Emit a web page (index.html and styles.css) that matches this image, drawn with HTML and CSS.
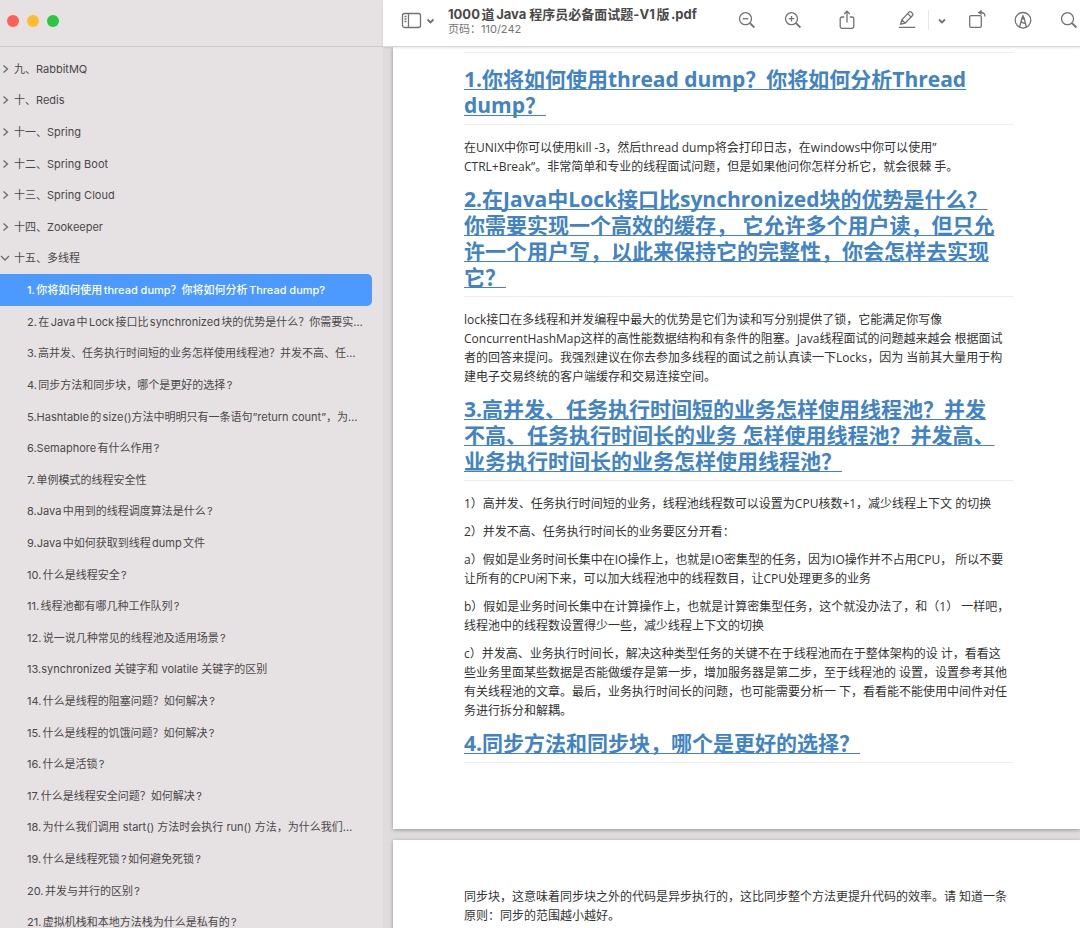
FILE: index.html
```html
<!DOCTYPE html>
<html lang="zh-CN">
<head>
<meta charset="utf-8">
<title>1000道Java程序员必备面试题-V1版.pdf</title>
<link rel="stylesheet" href="styles.css">
</head>
<body>
<div class="window">
  <aside class="sidebar">
    <div class="window-bar">
      <button class="light light-close" aria-label="关闭"></button>
      <button class="light light-min" aria-label="最小化"></button>
      <button class="light light-zoom" aria-label="缩放"></button>
    </div>
    <nav class="outline" aria-label="目录">
      <ul class="outline-list">
        <li class="row chapter"><svg class="chev" viewBox="0 0 10 10"><path d="M3.500 1.500 7.500 5 3.500 8.500"/></svg><a href="#c9">九、RabbitMQ</a></li>
        <li class="row chapter"><svg class="chev" viewBox="0 0 10 10"><path d="M3.500 1.500 7.500 5 3.500 8.500"/></svg><a href="#c10">十、Redis</a></li>
        <li class="row chapter"><svg class="chev" viewBox="0 0 10 10"><path d="M3.500 1.500 7.500 5 3.500 8.500"/></svg><a href="#c11">十一、Spring</a></li>
        <li class="row chapter"><svg class="chev" viewBox="0 0 10 10"><path d="M3.500 1.500 7.500 5 3.500 8.500"/></svg><a href="#c12">十二、Spring Boot</a></li>
        <li class="row chapter"><svg class="chev" viewBox="0 0 10 10"><path d="M3.500 1.500 7.500 5 3.500 8.500"/></svg><a href="#c13">十三、Spring Cloud</a></li>
        <li class="row chapter"><svg class="chev" viewBox="0 0 10 10"><path d="M3.500 1.500 7.500 5 3.500 8.500"/></svg><a href="#c14">十四、Zookeeper</a></li>
        <li class="row chapter"><svg class="chev" viewBox="0 0 10 10"><path d="M1 3 5 7 9 3"/></svg><a href="#c15">十五、多线程</a></li>
        <li class="row selected"><a href="#q1">1.你将如何使用thread dump？你将如何分析Thread dump?</a></li>
        <li class="row"><a href="#q2">2.在Java中Lock接口比synchronized块的优势是什么？你需要实…</a></li>
        <li class="row"><a href="#q3">3.高并发、任务执行时间短的业务怎样使用线程池？并发不高、任…</a></li>
        <li class="row"><a href="#q4">4.同步方法和同步块，哪个是更好的选择?</a></li>
        <li class="row"><a href="#q5">5.Hashtable的size()方法中明明只有一条语句”return count”，为…</a></li>
        <li class="row"><a href="#q6">6.Semaphore有什么作用?</a></li>
        <li class="row"><a href="#q7">7.单例模式的线程安全性</a></li>
        <li class="row"><a href="#q8">8.Java中用到的线程调度算法是什么?</a></li>
        <li class="row"><a href="#q9">9.Java中如何获取到线程dump文件</a></li>
        <li class="row"><a href="#q10">10.什么是线程安全?</a></li>
        <li class="row"><a href="#q11">11.线程池都有哪几种工作队列?</a></li>
        <li class="row"><a href="#q12">12.说一说几种常见的线程池及适用场景?</a></li>
        <li class="row"><a href="#q13">13.synchronized 关键字和 volatile 关键字的区别</a></li>
        <li class="row"><a href="#q14">14.什么是线程的阻塞问题？如何解决?</a></li>
        <li class="row"><a href="#q15">15.什么是线程的饥饿问题？如何解决?</a></li>
        <li class="row"><a href="#q16">16.什么是活锁?</a></li>
        <li class="row"><a href="#q17">17.什么是线程安全问题？如何解决?</a></li>
        <li class="row"><a href="#q18">18.为什么我们调用 start() 方法时会执行 run() 方法，为什么我们…</a></li>
        <li class="row"><a href="#q19">19.什么是线程死锁?如何避免死锁?</a></li>
        <li class="row"><a href="#q20">20.并发与并行的区别?</a></li>
        <li class="row"><a href="#q21">21.虚拟机栈和本地方法栈为什么是私有的?</a></li>
      </ul>
    </nav>
  </aside>

  <main class="viewer">
    <header class="toolbar">
      <button class="tool side-tool" aria-label="边栏">
        <svg width="34" height="20" viewBox="0 0 34 20"><rect x="2.500" y="3.500" width="18" height="14" rx="2"/><path d="M8.500 3.500v14M4.500 6.500h2M4.500 9h2M4.500 11.500h2"/><path class="bold" d="m27.500 9.500 3 3 3-3"/></svg>
      </button>
      <div class="doc-info">
        <h1 class="doc-title">1000道Java 程序员必备面试题-V1版.pdf</h1>
        <p class="doc-page">页码：110/242</p>
      </div>
      <div class="tools">
        <button class="tool" aria-label="缩小"><svg width="20" height="20" viewBox="0 0 20 20"><circle cx="8.500" cy="8.700" r="6"/><path d="M5.700 8.700h5.600"/><path class="bold" d="m13 13.200 4.400 4.300"/></svg></button>
        <button class="tool gap-26" aria-label="放大"><svg width="20" height="20" viewBox="0 0 20 20"><circle cx="8.500" cy="8.700" r="6"/><path d="M5.700 8.700h5.600M8.500 5.900v5.600"/><path class="bold" d="m13 13.200 4.400 4.300"/></svg></button>
        <button class="tool gap-34" aria-label="共享"><svg width="20" height="20" viewBox="0 0 20 20"><path d="M7.200 7H4.900A1.700 1.700 0 0 0 3.200 8.700v7.900a1.700 1.700 0 0 0 1.700 1.700h10.200a1.700 1.700 0 0 0 1.700-1.700V8.700A1.700 1.700 0 0 0 15.100 7h-2.300M10 12.500V1.400M7.200 4 10 1.200 12.800 4"/></svg></button>
        <button class="tool gap-40" aria-label="高亮"><svg width="20" height="20" viewBox="0 0 20 20"><path d="M1.800 17.300h16.400M3.600 14.200l1.300-4.300L12 2.100q1-1 2.100 0l1.400 1.300q1 1 0 2.100L8.200 13.100zM4.900 9.900l3.300 3.200M10.700 3.600l3.300 3.300"/></svg></button>
        <span class="divider"></span>
        <button class="tool" aria-label="高亮选项"><svg width="10" height="20" viewBox="0 0 10 20"><path class="bold" d="m2 9.500 3 3 3-3"/></svg></button>
        <button class="tool gap-20" aria-label="旋转"><svg width="20" height="20" viewBox="0 0 20 20"><rect x="2.700" y="5.700" width="11.600" height="11.600" rx="1.200"/><path d="M18 6.500c0-2.800-1.400-4-4-4h-1"/><path class="fill" d="m14.700-.3-4.200 2.700 4.200 2.700z"/></svg></button>
        <button class="tool gap-26" aria-label="标记"><svg width="20" height="20" viewBox="0 0 20 20"><circle cx="10" cy="10.300" r="7.800"/><path d="M6.700 16.800 8.800 8.500 10 6l1.200 2.500 2.100 8.300M7.800 12.800q1.100-1 2.200 0t2.200 0"/><path class="fill" d="M10 4.800 8.200 9.500h3.600z"/></svg></button>
        <button class="tool gap-26" aria-label="搜索"><svg width="20" height="20" viewBox="0 0 20 20"><circle cx="8.500" cy="8.700" r="6"/><path class="bold" d="m13 13.200 4.400 4.300"/></svg></button>
      </div>
    </header>

    <div class="pages">
      <article class="page page-first">
        <hr class="rule">
        <h2 class="question" id="q1"><a href="#q1">1.你将如何使用thread dump？你将如何分析Thread<br>dump？</a></h2>
        <p class="para">在UNIX中你可以使用kill -3，然后thread dump将会打印日志，在windows中你可以使用”<br>CTRL+Break”。非常简单和专业的线程面试问题，但是如果他问你怎样分析它，就会很棘 手。</p>
        <h2 class="question" id="q2"><a href="#q2">2.在Java中Lock接口比synchronized块的优势是什么？<br>你需要实现一个高效的缓存， 它允许多个用户读，但只允<br>许一个用户写，以此来保持它的完整性，你会怎样去实现<br>它？</a></h2>
        <p class="para">lock接口在多线程和并发编程中最大的优势是它们为读和写分别提供了锁，它能满足你写像<br>ConcurrentHashMap这样的高性能数据结构和有条件的阻塞。Java线程面试的问题越来越会 根据面试<br>者的回答来提问。我强烈建议在你去参加多线程的面试之前认真读一下Locks，因为 当前其大量用于构<br>建电子交易终统的客户端缓存和交易连接空间。</p>
        <h2 class="question" id="q3"><a href="#q3">3.高并发、任务执行时间短的业务怎样使用线程池？并发<br>不高、任务执行时间长的业务 怎样使用线程池？并发高、<br>业务执行时间长的业务怎样使用线程池？</a></h2>
        <p class="para">1）高并发、任务执行时间短的业务，线程池线程数可以设置为CPU核数+1，减少线程上下文 的切换</p>
        <p class="para">2）并发不高、任务执行时间长的业务要区分开看：</p>
        <p class="para">a）假如是业务时间长集中在IO操作上，也就是IO密集型的任务，因为IO操作并不占用CPU， 所以不要<br>让所有的CPU闲下来，可以加大线程池中的线程数目，让CPU处理更多的业务</p>
        <p class="para">b）假如是业务时间长集中在计算操作上，也就是计算密集型任务，这个就没办法了，和（1） 一样吧，<br>线程池中的线程数设置得少一些，减少线程上下文的切换</p>
        <p class="para">c）并发高、业务执行时间长，解决这种类型任务的关键不在于线程池而在于整体架构的设 计，看看这<br>些业务里面某些数据是否能做缓存是第一步，增加服务器是第二步，至于线程池的 设置，设置参考其他<br>有关线程池的文章。最后，业务执行时间长的问题，也可能需要分析一 下，看看能不能使用中间件对任<br>务进行拆分和解耦。</p>
        <h2 class="question" id="q4"><a href="#q4">4.同步方法和同步块，哪个是更好的选择？</a></h2>
      </article>
      <article class="page page-next">
        <p class="para">同步块，这意味着同步块之外的代码是异步执行的，这比同步整个方法更提升代码的效率。请 知道一条<br>原则：同步的范围越小越好。</p>
      </article>
    </div>
  </main>
</div>
</body>
</html>
```
FILE: styles.css
```css
* { box-sizing: border-box; }

body {
  margin: 0;
  font-family: Inter, "Noto Sans CJK SC", sans-serif;
  color: #4a4849;
  background: #e6e2e3;
}

button { border: 0; padding: 0; background: none; }
a { color: inherit; text-decoration: none; }

.window {
  display: grid;
  grid-template-columns: 383px minmax(0, 1fr);
  height: 100vh;
  overflow: hidden;
}

.sidebar {
  display: flex;
  flex-direction: column;
  min-height: 0;
}

.window-bar {
  display: flex;
  flex: none;
  align-items: center;
  gap: 8px;
  height: 47px;
  padding: 0 7px 5px;
  border-bottom: 1px solid #cfcbcc;
}

.light { width: 12px; height: 12px; border-radius: 50%; }
.light-close { background: #ff5f57; }
.light-min { background: #febc2e; }
.light-zoom { background: #28c840; }

.outline {
  display: flex;
  flex: 1;
  min-height: 0;
  padding-top: 6px;
  overflow: hidden;
}

.outline-list {
  display: flex;
  flex: 1;
  flex-direction: column;
  min-width: 0;
  margin: 0 0 -10px;
  padding: 0 11px 0 0;
  list-style: none;
  font-size: 11px;
  line-height: 16px;
  text-autospace: normal;
}

.row {
  display: flex;
  flex: 1 0 31px;
  align-items: center;
  padding-left: 27px;
  white-space: nowrap;
}

.chapter { gap: 4px; padding-left: 0; }

.selected {
  border-radius: 0 5px 5px 0;
  background: #4c9aff;
  color: #fff;
  font-weight: 500;
}

.chev { width: 10px; height: 10px; }
.chev path { fill: none; stroke: #6b696a; stroke-width: 1.3; }

.viewer {
  display: flex;
  flex-direction: column;
  min-width: 0;
  min-height: 0;
}

.toolbar {
  position: relative;
  display: flex;
  flex: none;
  height: 47px;
  padding: 0 1px 0 17px;
  background: #fff;
  border-bottom: 1px solid #dcdadb;
  box-shadow: 0 1px 2px #0000001a;
}

.side-tool { align-self: flex-start; margin-top: 10px; }

.doc-info { margin-left: 14px; padding-top: 5px; white-space: nowrap; }
.doc-title { margin: 0; font-size: 13px; line-height: 18px; font-weight: 700; text-autospace: normal; }
.doc-page { margin: 0; font-size: 11px; line-height: 13px; color: #767475; }

.tools {
  display: flex;
  align-items: flex-start;
  margin-left: auto;
  padding-top: 10px;
}

.tool { height: 20px; }
.tool svg { display: block; overflow: visible; fill: none; stroke: #747273; stroke-width: 1.3; }
.tool .bold { stroke-width: 1.8; }
.tool .fill { fill: #747273; stroke: none; }

.gap-20 { margin-left: 20px; }
.gap-26 { margin-left: 26px; }
.gap-34 { margin-left: 34px; }
.gap-40 { margin-left: 40px; }

.divider { width: 1px; height: 20px; margin: 0 8px 0 11px; background: #e8e6e7; }

.pages {
  flex: 1;
  min-height: 0;
  padding-left: 10px;
  overflow: hidden;
  background: #e0dcdd;
}

.page {
  padding: 0 67px 0 71px;
  background: #fff;
  box-shadow: 0 1px 4px #00000055;
  font-family: "Open Sans", "Noto Sans CJK SC", sans-serif;
  color: #333;
  white-space: nowrap;
  text-autospace: no-autospace;
}

.page-first { padding-top: 5px; padding-bottom: 53px; }
.page-next { margin-top: 11px; padding-top: 47px; padding-bottom: 48px; }

.rule { margin: 0 0 13px; border: 0; border-top: 1px solid #eee; }

.question {
  margin: 10px 0 13px;
  padding-bottom: 6px;
  border-bottom: 1px solid #eee;
  font-size: 21px;
  line-height: 26px;
  font-weight: 700;
  color: #4183c4;
}

.question a { text-decoration: underline; text-decoration-thickness: 1px; text-underline-offset: 2px; text-decoration-skip-ink: none; }

.para { margin: 0 0 9px; font-size: 12px; line-height: 19px; }
```
